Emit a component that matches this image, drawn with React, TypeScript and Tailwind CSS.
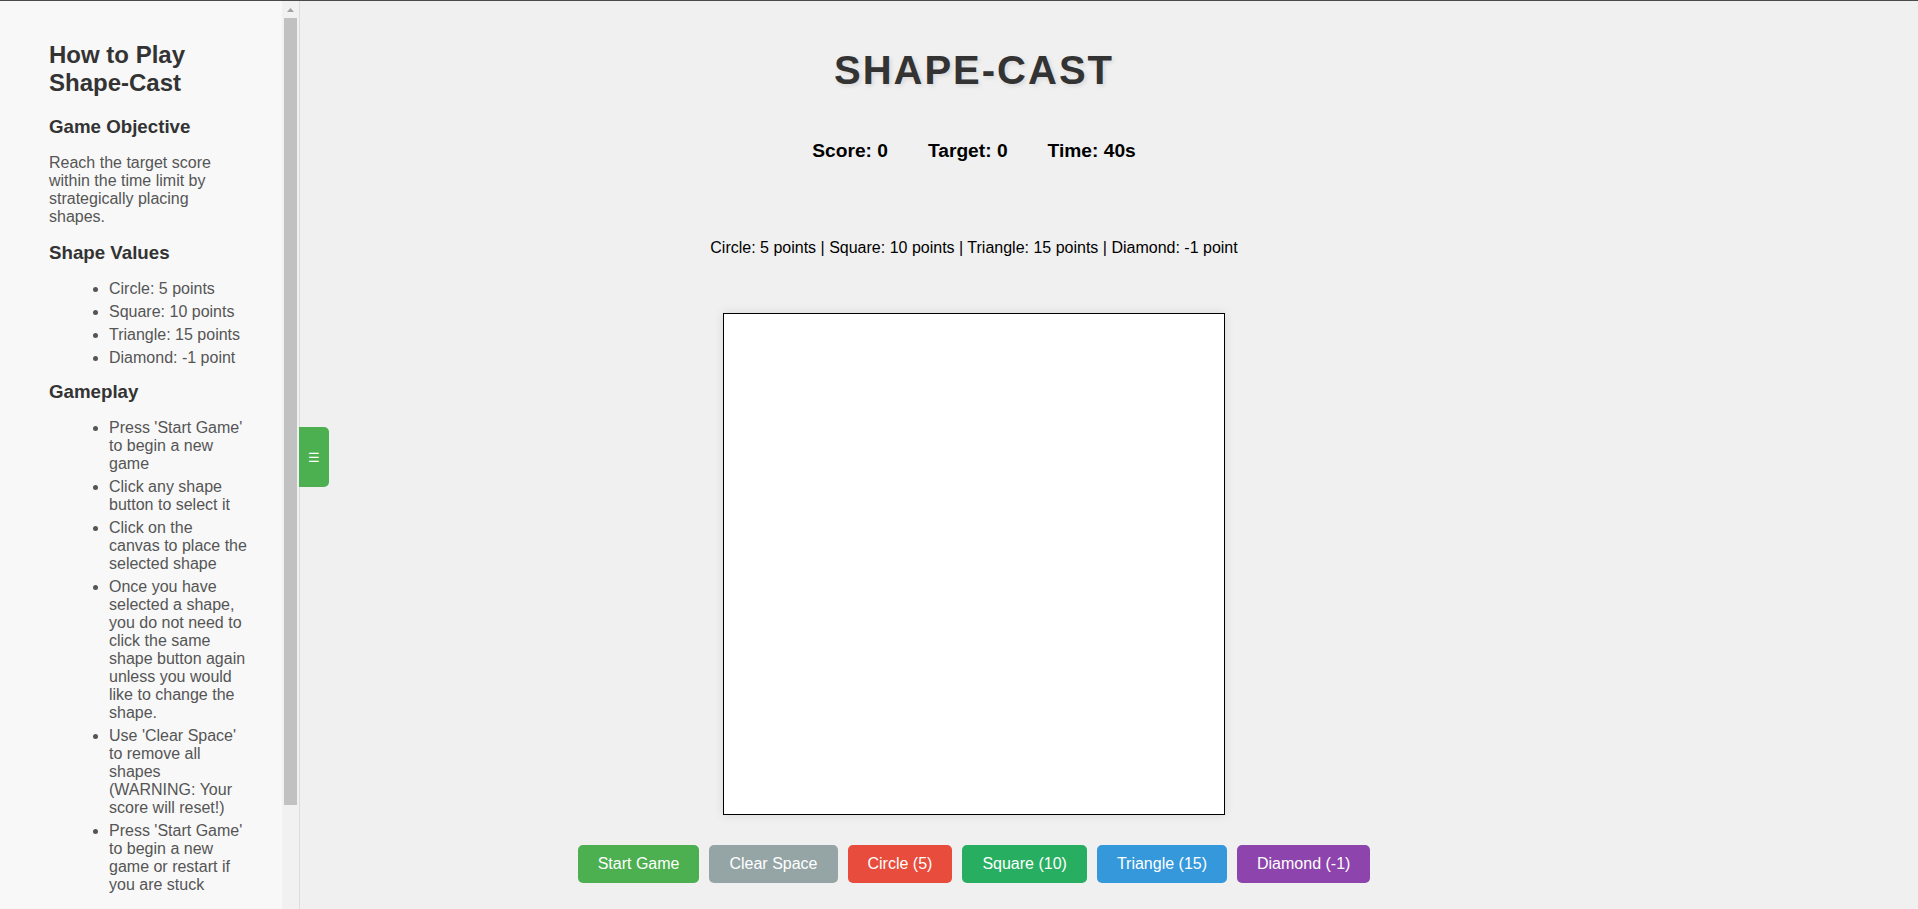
import React from "react"

const shapeValues = ["Circle: 5 points", "Square: 10 points", "Triangle: 15 points", "Diamond: -1 point"]

const gameplay = [
  "Press 'Start Game' to begin a new game",
  "Click any shape button to select it",
  "Click on the canvas to place the selected shape",
  "Once you have selected a shape, you do not need to click the same shape button again unless you would like to change the shape.",
  "Use 'Clear Space' to remove all shapes (WARNING: Your score will reset!)",
  "Press 'Start Game' to begin a new game or restart if you are stuck",
]

const buttons = [
  { label: "Start Game", cls: "bg-[#4caf50]" },
  { label: "Clear Space", cls: "bg-[#95a5a6]" },
  { label: "Circle (5)", cls: "bg-[#e74c3c]" },
  { label: "Square (10)", cls: "bg-[#27ae60]" },
  { label: "Triangle (15)", cls: "bg-[#3498db]" },
  { label: "Diamond (-1)", cls: "bg-[#8e44ad]" },
]

function Sidebar() {
  return (
    <aside className="fixed left-0 top-px bottom-0 z-10 flex w-[300px] border-r border-[#dddddd] bg-[#f8f8f8]">
      <div className="flex-1 overflow-hidden pl-[49px] pt-10">
        <div className="w-[198.3px]">
          <h2 className="text-[24px] font-bold leading-[28px] text-[#333333]">How to Play Shape-Cast</h2>

          <h3 className="mt-[19px] text-[18.72px] font-bold leading-[22px] text-[#333333]">Game Objective</h3>
          <p className="mt-4 text-[16px] leading-[18px] text-[#555555]">
            Reach the target score within the time limit by strategically placing shapes.
          </p>

          <h3 className="mt-4 text-[18.72px] font-bold leading-[22px] text-[#333333]">Shape Values</h3>
          <ul className="mt-4 list-outside list-disc space-y-[5px] pl-[60px] text-[16px] leading-[18px] text-[#555555]">
            {shapeValues.map((item) => (
              <li key={item}>{item}</li>
            ))}
          </ul>

          <h3 className="mt-[14px] text-[18.72px] font-bold leading-[22px] text-[#333333]">Gameplay</h3>
          <ul className="mt-4 list-outside list-disc space-y-[5px] pb-10 pl-[60px] text-[16px] leading-[18px] text-[#555555]">
            {gameplay.map((item, i) => (
              <li key={i}>{item}</li>
            ))}
          </ul>
        </div>
      </div>

      {/* scrollbar */}
      <div className="flex w-[17px] flex-col items-center bg-[#f1f1f1]">
        <div className="flex h-[17px] w-full items-center justify-center">
          <svg width="7" height="4" viewBox="0 0 7 4">
            <path d="M0 4 L3.5 0 L7 4 Z" fill="#a3a3a3" />
          </svg>
        </div>
        <div className="h-[787px] w-[13px] bg-[#c1c1c1]" />
      </div>

      <button className="absolute left-full top-[426px] flex h-[60px] w-[30px] items-center justify-center rounded-r-[5px] bg-[#4caf50] text-[13px] leading-none text-white">
        ☰
      </button>
    </aside>
  )
}

export default function App() {
  return (
    <div className="relative min-h-screen border-t border-[#4a4a4a] bg-[#f0f0f0] font-['Liberation_Sans',Arial,sans-serif]">
      <Sidebar />

      <main className="flex flex-col items-center pb-6 pl-[30px] pt-[46px]">
        <h1 className="text-[40px] font-bold leading-[46px] tracking-[2px] text-[#333333] [text-shadow:2px_2px_4px_rgba(0,0,0,0.1)]">
          SHAPE-CAST
        </h1>

        <div className="mt-[47px] flex gap-10 text-[19.2px] font-bold leading-[22px] text-black">
          <span>Score: 0</span>
          <span>Target: 0</span>
          <span>Time: 40s</span>
        </div>

        <p className="mt-[77px] text-[16px] leading-[18px] text-black">
          Circle: 5 points | Square: 10 points | Triangle: 15 points | Diamond: -1 point
        </p>

        <div className="mt-[56px] h-[502px] w-[502px] border border-black bg-white shadow-[0_0_10px_rgba(0,0,0,0.1)]" />

        <div className="mt-[30px] flex gap-[10px]">
          {buttons.map((b) => (
            <button
              key={b.label}
              className={`${b.cls} rounded-[5px] px-5 py-[10px] text-[16px] leading-[18px] text-white`}
            >
              {b.label}
            </button>
          ))}
        </div>
      </main>
    </div>
  )
}
